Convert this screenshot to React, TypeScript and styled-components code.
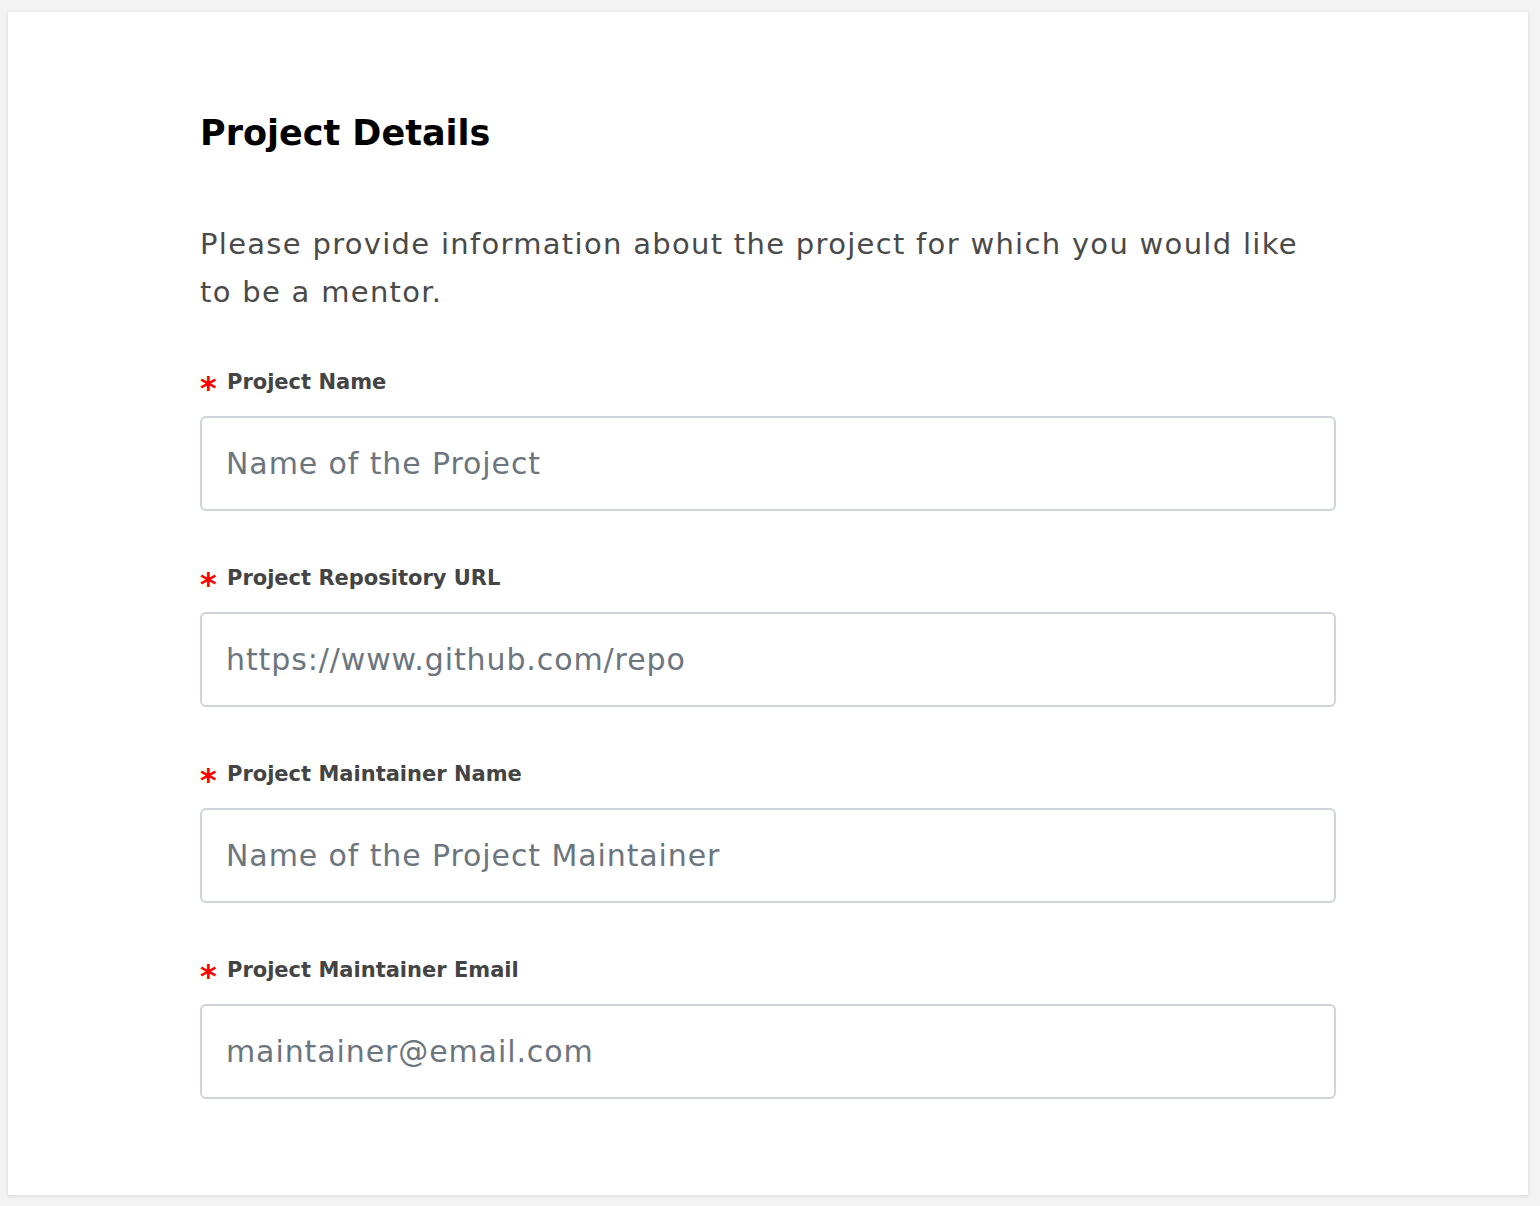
import React from "react";
import styled, { createGlobalStyle } from "styled-components";

const Global = createGlobalStyle`
  html, body { margin: 0; padding: 0; background: #f2f3f2; }
  body { font-family: "DejaVu Sans", "Open Sans", sans-serif; }
  * { box-sizing: border-box; }
`;

const Page = styled.div`
  padding: 12px 12px 10px 8px;
`;

const Card = styled.section`
  background: #ffffff;
  box-shadow: 0 1px 4px rgba(0, 0, 0, 0.12);
  padding: 96px 192px 96px 192px;
  display: flex;
  flex-direction: column;
`;

const Title = styled.h2`
  margin: 0;
  font-weight: 700;
  font-size: 35px;
  line-height: 50px;
  color: #000;
`;

const Intro = styled.p`
  margin: 62px 0 0;
  font-size: 29px;
  letter-spacing: 1.3px;
  line-height: 48px;
  color: #4a4a4a;
  font-weight: 400;
`;

const Field = styled.div<{ $first?: boolean }>`
  display: flex;
  flex-direction: column;
  margin-top: ${(p) => (p.$first ? "50px" : "51px")};
`;

const Label = styled.label`
  display: flex;
  align-items: center;
  gap: 10px;
  font-size: 21px;
  font-weight: 700;
  color: #444;
  line-height: 30px;
  margin-bottom: 18px;
`;

const Star = styled.span`
  color: #f00;
  font-size: 32px;
  font-weight: 700;
  line-height: 1;
  width: 17px;
  transform: translateY(6px);
`;

const Input = styled.input`
  width: 100%;
  height: 95px;
  border: 2px solid #ced4da;
  border-radius: 6px;
  padding: 0 24px;
  font-family: inherit;
  font-size: 30px;
  letter-spacing: 0.9px;
  color: #495057;
  outline: none;
  &::placeholder { color: #6c757d; }
`;

const fields = [
  { label: "Project Name", ph: "Name of the Project" },
  { label: "Project Repository URL", ph: "https://www.github.com/repo" },
  { label: "Project Maintainer Name", ph: "Name of the Project Maintainer" },
  { label: "Project Maintainer Email", ph: "maintainer@email.com" },
];

export default function App() {
  return (
    <Page>
      <Global />
      <Card>
        <Title>Project Details</Title>
        <Intro>
          Please provide information about the project for which you would like
          <br />
          to be a mentor.
        </Intro>
        {fields.map((f, i) => (
          <Field key={f.label} $first={i === 0}>
            <Label>
              <Star>*</Star>
              {f.label}
            </Label>
            <Input placeholder={f.ph} />
          </Field>
        ))}
      </Card>
    </Page>
  );
}
